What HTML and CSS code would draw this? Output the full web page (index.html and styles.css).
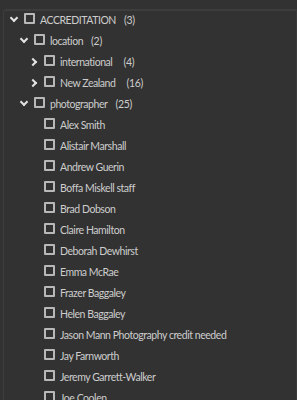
FILE: index.html
```html
<!DOCTYPE html>
<html lang="en">
<head>
    <meta charset="UTF-8">
    <meta name="viewport" content="width=device-width, initial-scale=1.0">
    <link rel="stylesheet" href="styles.css">
</head>
<body>
<div class="panel">
    <ul class="tree">
        <li class="row lvl0">
            <span class="twist down"></span><span class="box"></span>
            <span class="label">ACCREDITATION</span><span class="count">(3)</span>
        </li>
        <li class="row lvl1">
            <span class="twist down"></span><span class="box"></span>
            <span class="label">location</span><span class="count">(2)</span>
        </li>
        <li class="row lvl2">
            <span class="twist right"></span><span class="box"></span>
            <span class="label">international</span><span class="count wide">(4)</span>
        </li>
        <li class="row lvl2">
            <span class="twist right"></span><span class="box"></span>
            <span class="label">New Zealand</span><span class="count wide">(16)</span>
        </li>
        <li class="row lvl1">
            <span class="twist down"></span><span class="box"></span>
            <span class="label">photographer</span><span class="count">(25)</span>
        </li>
        <li class="row lvl2"><span class="twist"></span><span class="box"></span><span class="label">Alex Smith</span></li>
        <li class="row lvl2"><span class="twist"></span><span class="box"></span><span class="label">Alistair Marshall</span></li>
        <li class="row lvl2"><span class="twist"></span><span class="box"></span><span class="label">Andrew Guerin</span></li>
        <li class="row lvl2"><span class="twist"></span><span class="box"></span><span class="label">Boffa Miskell staff</span></li>
        <li class="row lvl2"><span class="twist"></span><span class="box"></span><span class="label">Brad Dobson</span></li>
        <li class="row lvl2"><span class="twist"></span><span class="box"></span><span class="label">Claire Hamilton</span></li>
        <li class="row lvl2"><span class="twist"></span><span class="box"></span><span class="label">Deborah Dewhirst</span></li>
        <li class="row lvl2"><span class="twist"></span><span class="box"></span><span class="label">Emma McRae</span></li>
        <li class="row lvl2"><span class="twist"></span><span class="box"></span><span class="label">Frazer Baggaley</span></li>
        <li class="row lvl2"><span class="twist"></span><span class="box"></span><span class="label">Helen Baggaley</span></li>
        <li class="row lvl2"><span class="twist"></span><span class="box"></span><span class="label">Jason Mann Photography credit needed</span></li>
        <li class="row lvl2"><span class="twist"></span><span class="box"></span><span class="label">Jay Farnworth</span></li>
        <li class="row lvl2"><span class="twist"></span><span class="box"></span><span class="label">Jeremy Garrett-Walker</span></li>
        <li class="row lvl2"><span class="twist"></span><span class="box"></span><span class="label">Joe Coolen</span></li>
    </ul>
</div>
</body>
</html>
```

FILE: styles.css
```css
html, body {
    margin: 0;
    padding: 0;
    height: 100%;
    overflow: hidden;
}

body {
    background-color: #323232;
    font-family: Lato, "Open Sans", sans-serif;
    font-size: 10.5px;
    color: #cdcdcd;
}

.panel {
    margin: 9px 0 0 3px;
    height: 420px;
    border-top: 2px solid #3d3d3d;
    border-left: 1px solid #3d3d3d;
    border-right: 1px solid #3a3a3a;
    border-top-left-radius: 4px;
}

.tree {
    list-style: none;
    margin: -2px 0 0 0;
    padding: 0;
}

.row {
    display: flex;
    align-items: center;
    height: 21px;
}

.lvl0 { padding-left: 5px; }
.lvl1 { padding-left: 15px; }
.lvl2 { padding-left: 25px; }

.twist {
    width: 15px;
    height: 21px;
    flex: none;
    position: relative;
}

/* chevrons drawn with two borders of a rotated square */
.twist.down::before,
.twist.right::before {
    content: "";
    position: absolute;
    width: 4px;
    height: 4px;
    border-right: 2px solid #e2e2e2;
    border-bottom: 2px solid #e2e2e2;
}

.twist.down::before {
    left: 2px;
    top: 6px;
    transform: rotate(45deg);
}

.twist.right::before {
    left: 1px;
    top: 8px;
    transform: rotate(-45deg);
}

.box {
    width: 7px;
    height: 7px;
    flex: none;
    border: 2px solid #b8b8b8;
    border-radius: 1px;
    margin-right: 5px;
    margin-top: -2px;
}

.label {
    white-space: nowrap;
    letter-spacing: -0.45px;
}

.count {
    margin-left: 8px;
    letter-spacing: -0.3px;
}

.count.wide {
    margin-left: 11px;
}
```
